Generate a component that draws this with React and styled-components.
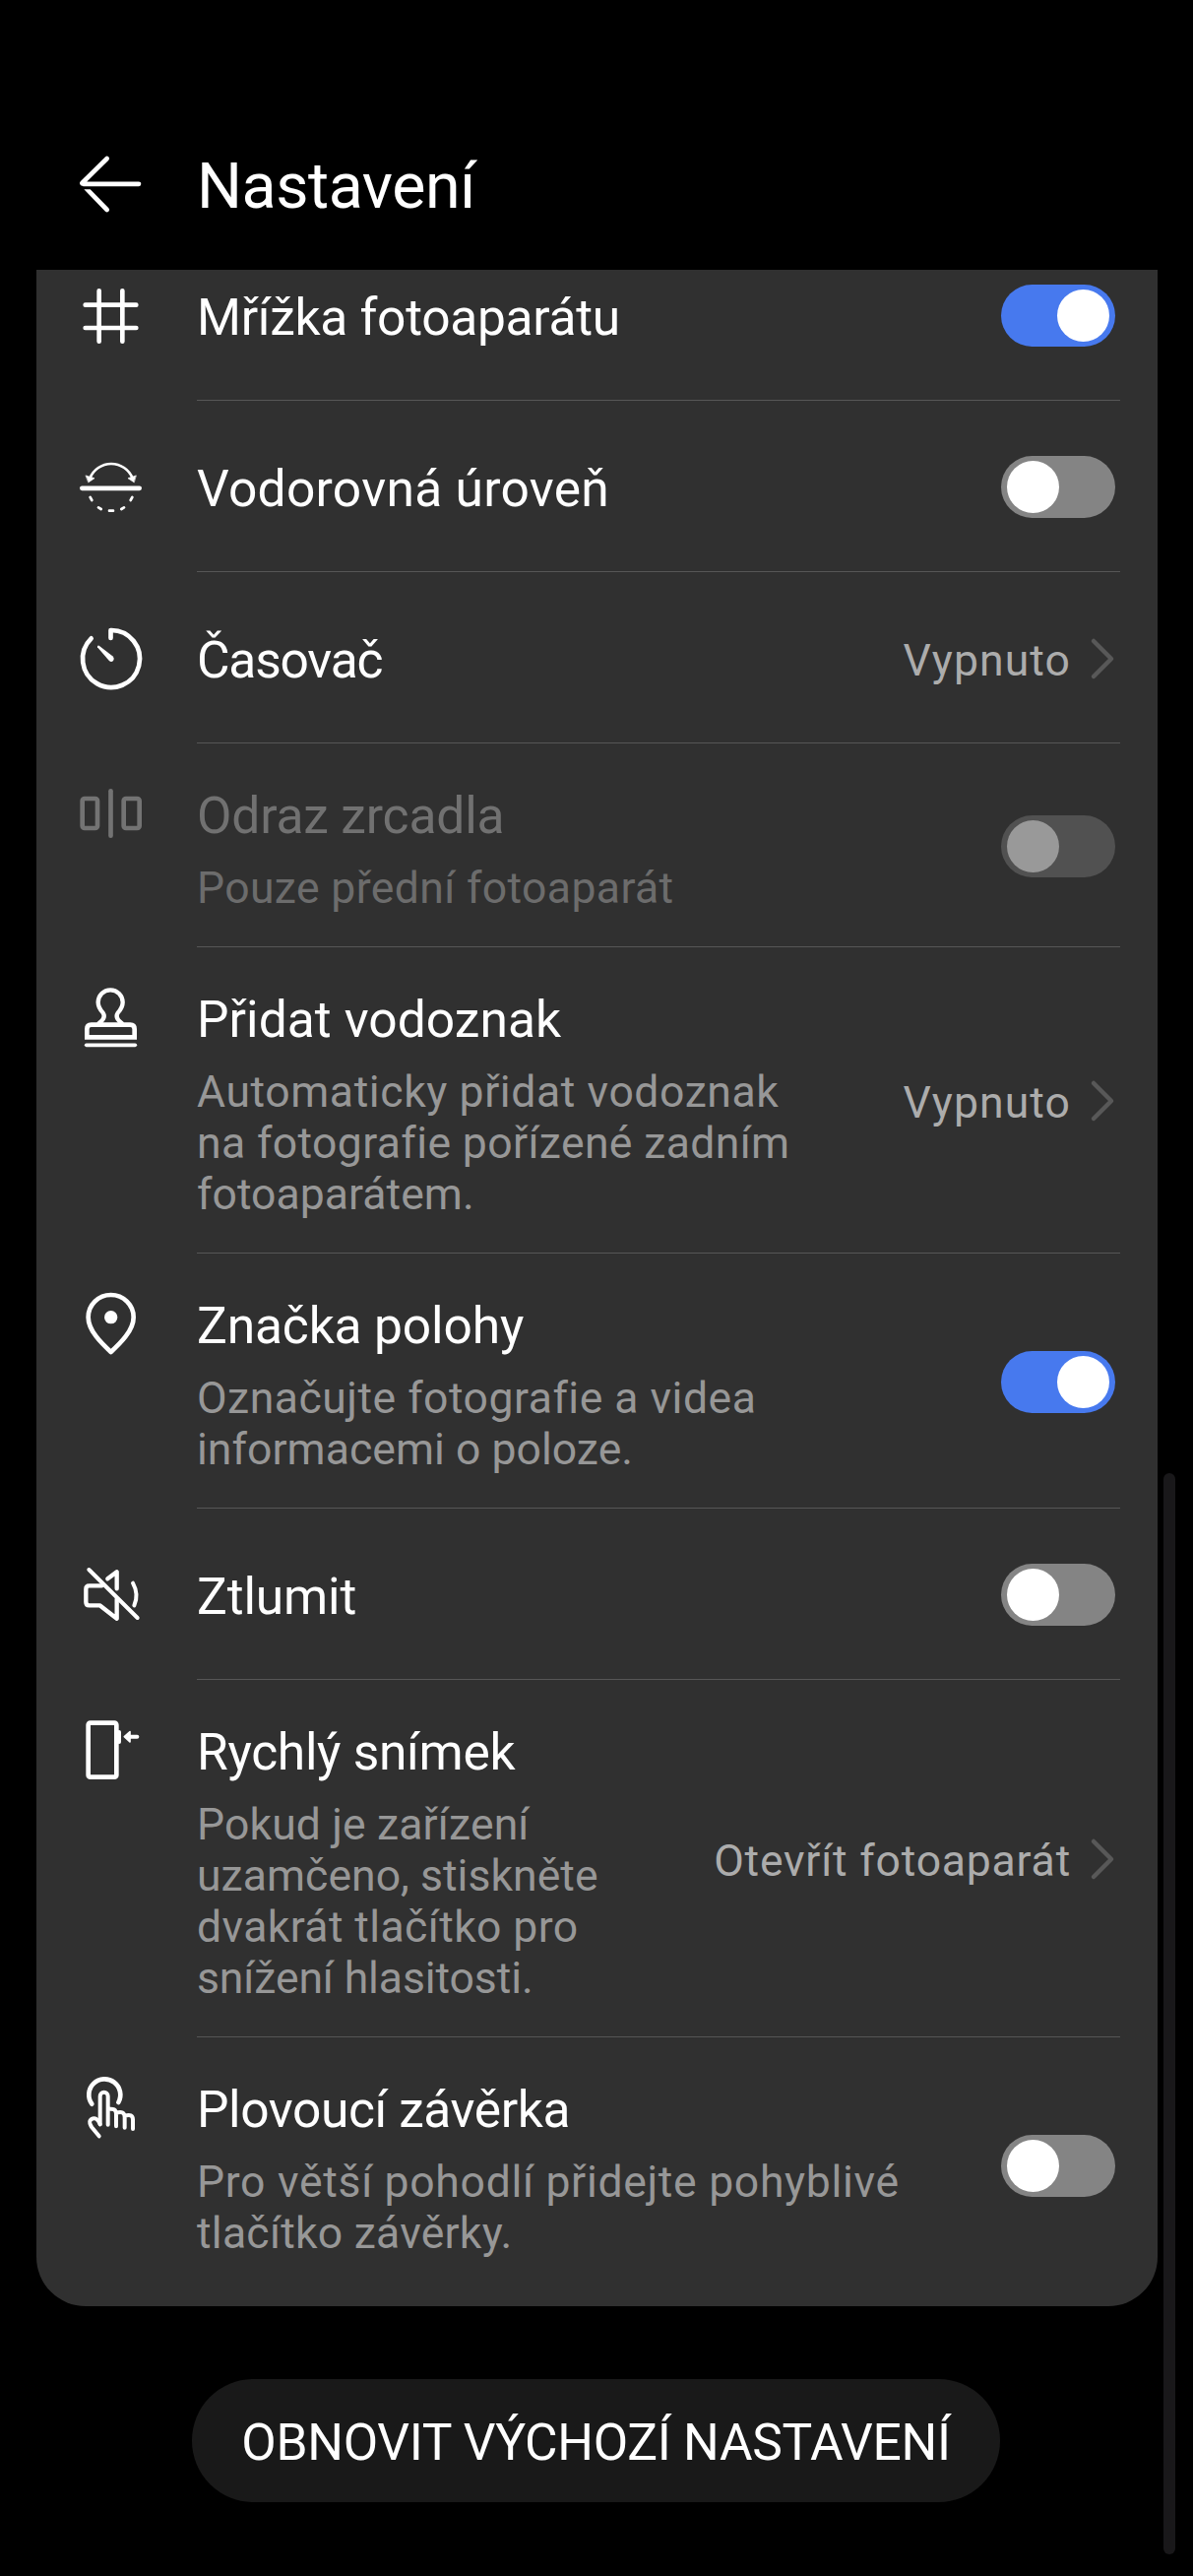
import React from "react";
import styled, { createGlobalStyle } from "styled-components";

const GlobalStyle = createGlobalStyle`
  body {
    margin: 0;
    background-color: #000;
    font-family: Roboto, "Noto Sans", sans-serif;
  }
`;

const Screen = styled.div`
  width: 1212px;
  height: 2616px;
  position: relative;
  overflow: hidden;
  background-color: #000;
  color: #fff;
`;

const Header = styled.header`
  display: flex;
  align-items: flex-start;
  height: 127px;
  padding: 147px 0 0 74px;
`;

const PageTitle = styled.h1`
  margin: 2px 0 0 46px;
  font-size: 64.5px;
  font-weight: 400;
  line-height: 80px;
  letter-spacing: -0.45px;
`;

const Panel = styled.main`
  display: flex;
  flex-direction: column;
  justify-content: flex-end;
  height: 2068px;
  margin: 0 36px 0 37px;
  overflow: hidden;
  background-color: #303030;
  border-radius: 0 0 50px 50px;
`;

const Row = styled.div`
  flex: none;
  display: grid;
  grid-template-columns: 80px 1fr auto;
  column-gap: 46px;
  padding: 0 43px 0 37px;
`;

const Divider = styled.hr`
  flex: none;
  height: 1px;
  margin: 0 38px 0 163px;
  border: 0;
  background-color: #565656;
`;

const Icon = styled.svg`
  display: block;
  width: 80px;
  height: 80px;
  fill: none;
  stroke: currentColor;
  stroke-width: 14;
  stroke-linecap: round;
  stroke-linejoin: round;
`;

const IconCell = styled.div`
  padding-top: ${(props) => (props.$tall ? "31.3px" : "47.5px")};
  color: ${(props) => (props.$disabled ? "#737373" : "#fff")};
`;

const Texts = styled.div`
  padding-top: ${(props) => (props.$tall ? "43.5px" : "59.5px")};
  padding-bottom: ${(props) => (props.$tall ? "33.5px" : "53.5px")};
  color: ${(props) => (props.$disabled ? "#717171" : "#fff")};
  white-space: nowrap;
`;

const Title = styled.div`
  font-size: 51.5px;
  line-height: 60px;
  letter-spacing: ${(props) => props.$tracking || 0}px;
`;

const Description = styled.div`
  margin-top: 17px;
  color: ${(props) => (props.$disabled ? "#6c6c6c" : "#979797")};
  font-size: 44.5px;
  line-height: 52px;
`;

const DescriptionLine = styled.div`
  letter-spacing: ${(props) => props.$tracking}px;
`;

const Control = styled.div`
  display: flex;
  align-items: center;
  justify-content: flex-end;
  padding-top: 2px;
`;

const Value = styled.span`
  margin: 4px 19px 0 0;
  color: #acacac;
  font-size: 44.5px;
  line-height: 52px;
  letter-spacing: ${(props) => props.$tracking}px;
`;

const Chevron = styled.svg`
  width: 26px;
  height: 44px;
  fill: none;
  stroke: #585858;
  stroke-width: 4.5;
  stroke-linecap: round;
  stroke-linejoin: round;
`;

const Track = styled.span`
  box-sizing: border-box;
  display: flex;
  justify-content: ${(props) => (props.$on ? "flex-end" : "flex-start")};
  width: 116px;
  height: 63px;
  padding: 5px 6px;
  border-radius: 32px;
  background-color: ${(props) =>
    props.$on ? "#4779ee" : props.$disabled ? "#515151" : "#848484"};
`;

const Knob = styled.span`
  width: 53px;
  height: 53px;
  border-radius: 50%;
  background-color: ${(props) => (props.$disabled ? "#999" : "#fff")};
`;

const PanelEnd = styled.div`
  flex: none;
  height: 15px;
`;

const ResetButton = styled.button`
  display: block;
  width: 821px;
  height: 125px;
  margin: 74px 0 0 195px;
  padding: 3px 0 0;
  border: 0;
  border-radius: 63px;
  background-color: #191919;
  color: #fff;
  font: inherit;
  font-size: 51.5px;
  letter-spacing: -0.3px;
  white-space: nowrap;
`;

const ScrollThumb = styled.div`
  position: absolute;
  top: 1496px;
  right: 18px;
  width: 12px;
  height: 1098px;
  border-radius: 6px;
  background-color: #19181a;
`;

const BackIcon = () => (
  <Icon viewBox="0 0 240 240">
    <path d="M104 42 L28 117 M32 119.5 H201" />
    <path
      d="M34 136 H53 L109 193 A7 7 0 0 1 99 203 Z"
      fill="currentColor"
      stroke="none"
    />
  </Icon>
);

const GridIcon = () => (
  <Icon viewBox="0 0 240 240">
    <path d="M80 43 V197 M151 43 V197 M38 86 H193 M38 156 H193" />
  </Icon>
);

const LevelIcon = () => (
  <Icon viewBox="0 0 240 240">
    <path d="M28 122.5 H203" />
    <path d="M52 92 A70 70 0 0 1 182 92" strokeWidth="8" />
    <path
      d="M40 84 L66 92 L48 104 Z M192 84 L168 92 L186 104 Z"
      fill="currentColor"
      strokeWidth="2"
    />
    <path
      d="M53 150 L58 159 M78 181 L86 186 M111 191 H123 M148 186 L156 181 M176 159 L181 150"
      strokeWidth="8"
    />
  </Icon>
);

const TimerIcon = () => (
  <Icon viewBox="0 0 240 240">
    <path d="M115.5 57 V33 A87 87 0 1 1 56 58" />
    <path
      d="M80 80 Q73 79 75 85 L110 125 Q117 132 123 126 Q128 119 121 112 Z"
      fill="currentColor"
      stroke="none"
    />
  </Icon>
);

const MirrorIcon = () => (
  <Icon viewBox="0 0 240 240">
    <rect x="29" y="75" width="46" height="90" rx="7" />
    <rect x="155" y="75" width="48" height="90" rx="7" />
    <path d="M115.5 52 V188" />
  </Icon>
);

const StampIcon = () => (
  <Icon viewBox="0 0 240 240">
    <path
      d="M80 138 C94 128 99 118 92 107 C83 97 77 89 77 75 A37.5 38 0 0 1 152 75 C152 89 146 97 137 107 C130 118 135 128 149 138"
      strokeWidth="13"
    />
    <path
      d="M43 181 V156 Q43 143 56 143 H175 Q188 143 188 156 V181 Z"
      strokeLinejoin="miter"
    />
    <path d="M41 205 H190" strokeWidth="11" />
  </Icon>
);

const PinIcon = () => (
  <Icon viewBox="0 0 240 240">
    <path d="M116 207 C88 181 47 142 47 101 A69 68 0 0 1 185 101 C185 142 144 181 116 207 Z" />
    <circle cx="116" cy="101" r="20" fill="currentColor" stroke="none" />
  </Icon>
);

const MuteIcon = () => (
  <Icon viewBox="0 0 240 240">
    <path d="M49 42 L197 189" strokeWidth="12" />
    <path
      d="M88 91 H50 Q40 91 40 101 V141 Q40 151 50 151 H82 L134 191 V132"
      strokeWidth="13"
    />
    <path d="M106 70 L134 49 V100" strokeWidth="13" />
    <path d="M183 83 Q202 118 187 151" strokeWidth="12" />
  </Icon>
);

const QuickShotIcon = () => (
  <Icon viewBox="0 0 240 240">
    <rect x="47" y="38" width="86" height="165" rx="6" />
    <path d="M141 66 V96" strokeWidth="12" />
    <path d="M174 80 H196" strokeWidth="12" />
    <path d="M157 80 L174 65 V96 Z" fill="currentColor" strokeWidth="5" />
  </Icon>
);

const TouchIcon = () => (
  <Icon viewBox="0 0 240 240">
    <path d="M58 110 A48 48 0 1 1 139 105" />
    <path
      d="M83 172 V86 A12 12 0 0 1 107 86 V173 M107 126 Q132 121 132 140 V178 M132 137 Q158 129 158 150 V182 M158 146 Q183 138 183 158 V186"
      strokeWidth="12"
    />
    <path
      d="M83 172 C77 156 67 150 57 156 C46 163 53 172 57 180 L80 208"
      strokeWidth="12"
    />
  </Icon>
);

const settings = [
  { icon: GridIcon, title: "Mřížka fotoaparátu", tracking: -0.3, on: true },
  { icon: LevelIcon, title: "Vodorovná úroveň", tracking: 0.3 },
  {
    icon: TimerIcon,
    title: "Časovač",
    tracking: -1.2,
    value: "Vypnuto",
    valueTracking: 1.1,
  },
  {
    icon: MirrorIcon,
    title: "Odraz zrcadla",
    tracking: -0.15,
    lines: [{ text: "Pouze přední fotoaparát", tracking: 0.38 }],
    disabled: true,
  },
  {
    icon: StampIcon,
    title: "Přidat vodoznak",
    tracking: 0.07,
    lines: [
      { text: "Automaticky přidat vodoznak", tracking: 0.6 },
      { text: "na fotografie pořízené zadním", tracking: 0.38 },
      { text: "fotoaparátem.", tracking: 0.05 },
    ],
    value: "Vypnuto",
    valueTracking: 1.1,
  },
  {
    icon: PinIcon,
    title: "Značka polohy",
    tracking: -0.15,
    lines: [
      { text: "Označujte fotografie a videa", tracking: 0.5 },
      { text: "informacemi o poloze.", tracking: 0.05 },
    ],
    on: true,
  },
  { icon: MuteIcon, title: "Ztlumit", tracking: -0.15 },
  {
    icon: QuickShotIcon,
    title: "Rychlý snímek",
    tracking: -0.3,
    lines: [
      { text: "Pokud je zařízení", tracking: 0.15 },
      { text: "uzamčeno, stiskněte", tracking: 0.05 },
      { text: "dvakrát tlačítko pro", tracking: 0.4 },
      { text: "snížení hlasitosti.", tracking: -0.1 },
    ],
    value: "Otevřít fotoaparát",
    valueTracking: 0.8,
  },
  {
    icon: TouchIcon,
    title: "Plovoucí závěrka",
    tracking: -0.4,
    lines: [
      { text: "Pro větší pohodlí přidejte pohyblivé", tracking: 0.7 },
      { text: "tlačítko závěrky.", tracking: 0.25 },
    ],
  },
];

const Setting = ({ item }) => {
  const tall = Boolean(item.lines);
  const IconShape = item.icon;
  return (
    <Row>
      <IconCell $tall={tall} $disabled={item.disabled}>
        <IconShape />
      </IconCell>
      <Texts $tall={tall} $disabled={item.disabled}>
        <Title $tracking={item.tracking}>{item.title}</Title>
        {tall && (
          <Description $disabled={item.disabled}>
            {item.lines.map((line) => (
              <DescriptionLine key={line.text} $tracking={line.tracking}>
                {line.text}
              </DescriptionLine>
            ))}
          </Description>
        )}
      </Texts>
      <Control>
        {item.value ? (
          <>
            <Value $tracking={item.valueTracking}>{item.value}</Value>
            <Chevron viewBox="0 0 26 44">
              <path d="M4 4 L22 22 L4 40" />
            </Chevron>
          </>
        ) : (
          <Track $on={item.on} $disabled={item.disabled}>
            <Knob $disabled={item.disabled} />
          </Track>
        )}
      </Control>
    </Row>
  );
};

const App = () => {
  return (
    <Screen>
      <GlobalStyle />
      <Header>
        <BackIcon />
        <PageTitle>Nastavení</PageTitle>
      </Header>
      <Panel>
        {settings.map((item, index) => (
          <React.Fragment key={item.title}>
            {index > 0 && <Divider />}
            <Setting item={item} />
          </React.Fragment>
        ))}
        <PanelEnd />
      </Panel>
      <ResetButton>OBNOVIT VÝCHOZÍ NASTAVENÍ</ResetButton>
      <ScrollThumb />
    </Screen>
  );
};

export default App;
